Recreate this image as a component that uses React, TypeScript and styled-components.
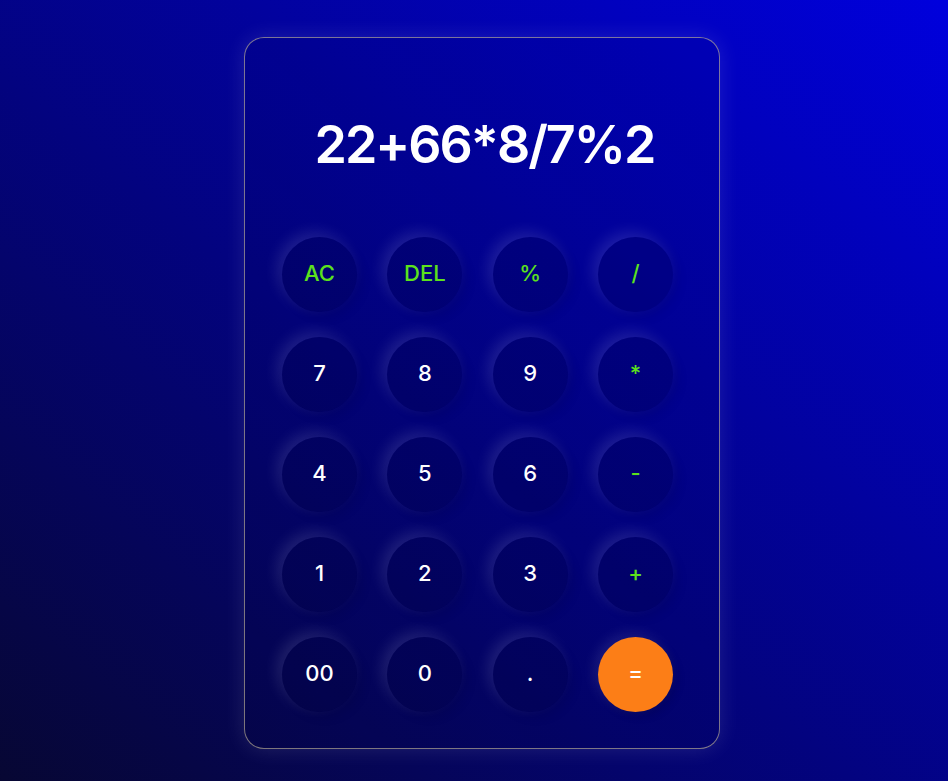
import React from 'react';
import styled, { createGlobalStyle } from 'styled-components';

const GlobalStyle = createGlobalStyle`
    html, body {
        margin: 0;
        padding: 0;
        height: 100%;
    }
    body {
        font-family: Inter, "Open Sans", sans-serif;
        background: linear-gradient(to top right, #070733 0%, #03037f 45%, #0000dd 100%);
        min-height: 781px;
    }
`

type Key = {
    label: string
    kind?: 'op' | 'equal'
}

const keys: Key[] = [
    { label: 'AC', kind: 'op' },
    { label: 'DEL', kind: 'op' },
    { label: '%', kind: 'op' },
    { label: '/', kind: 'op' },
    { label: '7' },
    { label: '8' },
    { label: '9' },
    { label: '*', kind: 'op' },
    { label: '4' },
    { label: '5' },
    { label: '6' },
    { label: '-', kind: 'op' },
    { label: '1' },
    { label: '2' },
    { label: '3' },
    { label: '+', kind: 'op' },
    { label: '00' },
    { label: '0' },
    { label: '.' },
    { label: '=', kind: 'equal' },
]

export default function App() {
    const [expression, setExpression] = React.useState<string>('22+66*8/7%2')

    const onKey = (label: string) => {
        if (label === 'AC') return setExpression('')
        if (label === 'DEL') return setExpression(expression.slice(0, -1))
        if (label === '=') return
        setExpression(expression + label)
    }

    return (
        <>
            <GlobalStyle />
            <Page>
                <Calculator>
                    <Display>{expression}</Display>
                    <Keypad>
                        {keys.map((k) => (
                            <KeyButton key={k.label} $kind={k.kind} onClick={() => onKey(k.label)}>
                                {k.label}
                            </KeyButton>
                        ))}
                    </Keypad>
                </Calculator>
            </Page>
        </>
    )
}

const Page = styled.div`
    min-height: 781px;
    display: flex;
    justify-content: center;
    padding-top: 37px;
    box-sizing: border-box;
`

const Calculator = styled.div`
    width: 476px;
    height: 712px;
    box-sizing: border-box;
    margin-left: 16px;
    padding: 0 45px 36px 37px;
    border: 1px solid rgba(190, 180, 150, 0.65);
    border-radius: 20px;
    background: rgba(0, 0, 40, 0.08);
    box-shadow: 0 0 22px rgba(255, 255, 255, 0.12);
    display: flex;
    flex-direction: column;
`

const Display = styled.div`
    height: 199px;
    display: flex;
    align-items: center;
    justify-content: center;
    padding-left: 13px;
    padding-top: 14px;
    box-sizing: border-box;
    color: #ffffff;
    font-size: 52px;
    font-weight: 600;
    letter-spacing: -2px;
`

const KeyButton = styled.button<{ $kind?: 'op' | 'equal' }>`
    width: 75px;
    height: 75px;
    border-radius: 50%;
    border: none;
    padding: 0 0 3px;
    cursor: pointer;
    font-family: Inter, "Open Sans", sans-serif;
    font-size: 22px;
    font-weight: 500;
    color: ${p => p.$kind === 'op' ? '#5ce21c' : '#ffffff'};
    background: ${p => p.$kind === 'equal' ? '#fc7e17' : 'rgba(0, 0, 50, 0.2)'};
    box-shadow: ${p => p.$kind === 'equal'
        ? '-4px -4px 14px rgba(255, 255, 255, 0.1), 4px 4px 10px rgba(0, 0, 0, 0.12)'
        : '-5px -5px 15px rgba(255, 255, 255, 0.12), 5px 5px 12px rgba(0, 0, 0, 0.08)'};
`

const Keypad = styled.div`
    display: grid;
    grid-template-columns: repeat(4, 75px);
    grid-auto-rows: 75px;
    column-gap: 30.34px;
    row-gap: 25px;
`
